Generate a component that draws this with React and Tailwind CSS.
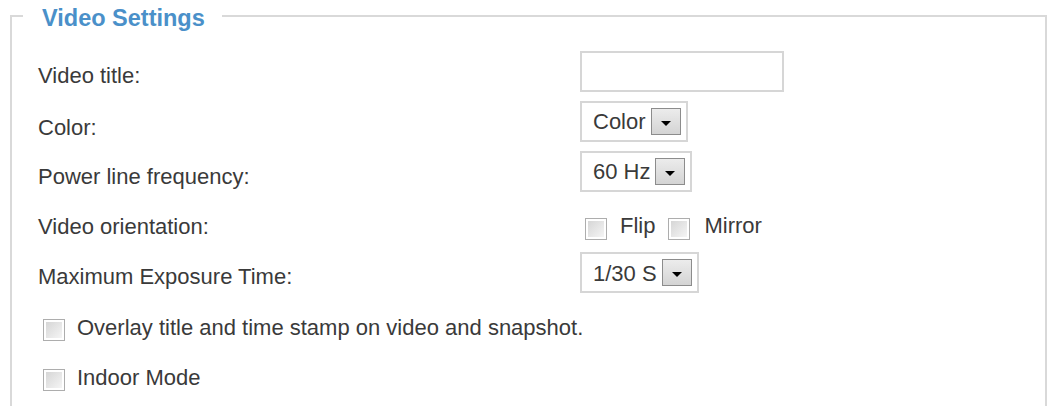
import React from 'react';

const font = { fontFamily: '"Liberation Sans", Arial, sans-serif' };

const Checkbox = ({ className = '' }) => (
  <span className={`inline-flex w-[22px] h-[22px] shrink-0 border border-[#adadad] bg-white p-[2px] ${className}`}>
    <span className="block w-full h-full bg-gradient-to-br from-[#d6d6d6] to-[#f5f5f5]" />
  </span>
);

const Select = ({ value }) => (
  <div className="flex items-center h-[41px] border-2 border-[#d6d6d6] bg-white pl-[11px] pr-[5px] gap-[5px]">
    <span className="text-[22px] leading-none text-[#3a3a3a] mt-[2px]">{value}</span>
    <span className="flex justify-center items-end w-[30px] h-[27px] border border-[#8c8c8c] bg-gradient-to-b from-[#ececec] to-[#d4d4d4] pb-[8px]">
      <span className="w-0 h-0 border-l-[5px] border-r-[5px] border-t-[5px] border-l-transparent border-r-transparent border-t-black" />
    </span>
  </div>
);

const Row = ({ label, children, labelShift = 'mt-[11px]' }) => (
  <div className="flex items-center h-[50px]">
    <div className={`w-[542px] shrink-0 text-[22px] leading-none text-[#3a3a3a] ${labelShift}`}>{label}</div>
    {children}
  </div>
);

export default function App() {
  return (
    <div className="w-[1053px] h-[406px] overflow-hidden bg-white" style={font}>
      <fieldset className="ml-[10px] w-[1037px] border-2 border-[#d9d9d9] pb-[40px]">
        <legend className="ml-[11px] pl-[19px] pr-[17px] pt-[5px] text-[23.5px] leading-[27px] font-bold text-[#4a90c9]">
          Video Settings
        </legend>

        <div className="pt-[14px] pl-[26px]">
          <Row label="Video title:" labelShift="mt-[10px]">
            <div className="w-[204px] h-[41px] border-2 border-[#d6d6d6] bg-white" />
          </Row>

          <Row label="Color:" labelShift="mt-[13px]">
            <Select value="Color" />
          </Row>

          <Row label="Power line frequency:">
            <Select value="60 Hz" />
          </Row>

          <Row label="Video orientation:">
            <div className="flex items-center ml-[5px] text-[22px] leading-none text-[#3a3a3a]">
              <Checkbox className="mt-[16px]" />
              <span className="ml-[13px] mt-[9px]">Flip</span>
              <Checkbox className="ml-[13px] mt-[16px]" />
              <span className="ml-[14px] mt-[9px]">Mirror</span>
            </div>
          </Row>

          <Row label="Maximum Exposure Time:">
            <div className="mt-[3px]">
              <Select value="1/30 S" />
            </div>
          </Row>

          <div className="flex items-center h-[50px] ml-[5px] text-[22px] leading-none text-[#3a3a3a]">
            <Checkbox className="mt-[17px]" />
            <span className="ml-[12px] mt-[13px]">Overlay title and time stamp on video and snapshot.</span>
          </div>

          <div className="flex items-center h-[50px] ml-[5px] text-[22px] leading-none text-[#3a3a3a]">
            <Checkbox className="mt-[17px]" />
            <span className="ml-[12px] mt-[13px]">Indoor Mode</span>
          </div>
        </div>
      </fieldset>
    </div>
  );
}
